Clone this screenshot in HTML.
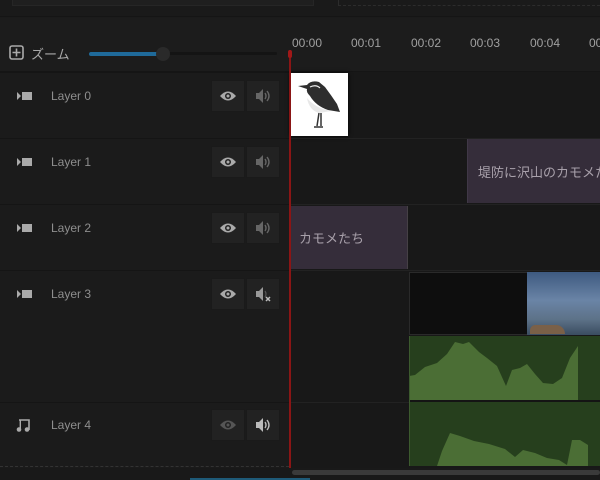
<!DOCTYPE html>
<html><head><meta charset="utf-8"><style>
*{margin:0;padding:0;box-sizing:border-box}
body{width:600px;height:480px;background:#1b1b1b;position:relative;overflow:hidden;font-family:"Liberation Sans","Noto Sans CJK JP",sans-serif;color:#9a9a9a}
.a{position:absolute}
.lbl{font-size:12px;color:#8e8e8e}
.btn{position:absolute;width:34px;height:32px;background:#222;border:1px solid #1a1a1a}
.tc{position:absolute;top:36px;font-size:12px;color:#a0a0a0}
.row{position:absolute;left:0;width:600px;border-top:1px solid #151515}
</style></head><body>
<div class="a" style="left:0;top:0;width:600px;height:17px;background:#1a1a1a;border-bottom:1px solid #151515"></div>
<div class="a" style="left:12px;top:0;width:302px;height:6px;background:#1f1f1f;border:1px solid #262626;border-top:none"></div>
<div class="a" style="left:338px;top:0;width:262px;height:6px;border-bottom:1px dashed #2c2c2c;border-left:1px dashed #2c2c2c"></div>
<div class="a" style="left:0;top:18px;width:600px;height:54px;background:#1c1c1c;border-bottom:1px solid #151515"></div>
<svg class="a" style="left:9px;top:45px" width="15" height="15" viewBox="0 0 15 15"><rect x="1" y="1" width="13" height="13" rx="2" fill="none" stroke="#aaa" stroke-width="1.6"/><path d="M7.5 3.5v8M3.5 7.5h8" stroke="#aaa" stroke-width="1.6"/></svg>
<div class="a" style="left:31px;top:44px;font-size:13px;color:#a8a8a8">ズーム</div>
<div class="a" style="left:89px;top:52px;width:188px;height:3px;background:#141414;border-radius:2px"></div>
<div class="a" style="left:89px;top:52px;width:70px;height:4px;background:#1f6a9a;border-radius:2px"></div>
<div class="a" style="left:156px;top:47px;width:14px;height:14px;background:#2a2a2a;border-radius:50%"></div>
<div class="tc" style="left:292px">00:00</div><div class="tc" style="left:351px">00:01</div><div class="tc" style="left:411px">00:02</div><div class="tc" style="left:470px">00:03</div><div class="tc" style="left:530px">00:04</div><div class="tc" style="left:589px">00:05</div>
<div class="row" style="top:72px;height:66px"></div>
<div class="row" style="top:138px;height:66px"></div>
<div class="row" style="top:204px;height:66px"></div>
<div class="row" style="top:270px;height:132px"></div>
<div class="row" style="top:402px;height:64px"></div>
<div class="a" style="left:0;top:466px;width:289px;border-top:1px dashed #333"></div>
<div class="a" style="left:289px;top:72px;width:311px;height:396px;background:#181818"></div>
<div class="a" style="left:289px;top:138px;width:311px;height:1px;background:#222"></div>
<div class="a" style="left:289px;top:204px;width:311px;height:1px;background:#222"></div>
<div class="a" style="left:289px;top:270px;width:311px;height:1px;background:#222"></div>
<div class="a" style="left:289px;top:402px;width:311px;height:1px;background:#222"></div>
<svg class="a" style="left:17px;top:91px" width="15" height="10"><path d="M0 1l4 4-4 4z" fill="#aaa"/><rect x="5" y="1" width="10" height="8" fill="#aaa"/></svg>
<div class="a lbl" style="left:51px;top:89px">Layer 0</div>
<svg class="a" style="left:17px;top:157px" width="15" height="10"><path d="M0 1l4 4-4 4z" fill="#aaa"/><rect x="5" y="1" width="10" height="8" fill="#aaa"/></svg>
<div class="a lbl" style="left:51px;top:155px">Layer 1</div>
<svg class="a" style="left:17px;top:223px" width="15" height="10"><path d="M0 1l4 4-4 4z" fill="#aaa"/><rect x="5" y="1" width="10" height="8" fill="#aaa"/></svg>
<div class="a lbl" style="left:51px;top:221px">Layer 2</div>
<svg class="a" style="left:17px;top:289px" width="15" height="10"><path d="M0 1l4 4-4 4z" fill="#aaa"/><rect x="5" y="1" width="10" height="8" fill="#aaa"/></svg>
<div class="a lbl" style="left:51px;top:287px">Layer 3</div>
<svg class="a" style="left:16px;top:418px" width="14" height="14"><path d="M3 2h10v10" fill="none" stroke="#aaa" stroke-width="1.6"/><circle cx="3" cy="11.5" r="2.3" fill="#aaa"/><circle cx="11" cy="11.5" r="2.3" fill="#aaa"/><path d="M4.3 2v9" stroke="#aaa" stroke-width="1.4"/></svg>
<div class="a lbl" style="left:51px;top:418px">Layer 4</div>
<div class="btn" style="left:211px;top:80px"></div><div class="btn" style="left:246px;top:80px"></div>
<div class="btn" style="left:211px;top:146px"></div><div class="btn" style="left:246px;top:146px"></div>
<div class="btn" style="left:211px;top:212px"></div><div class="btn" style="left:246px;top:212px"></div>
<div class="btn" style="left:211px;top:278px"></div><div class="btn" style="left:246px;top:278px"></div>
<div class="btn" style="left:211px;top:409px"></div><div class="btn" style="left:246px;top:409px"></div>
<svg class="a" style="left:219px;top:89px" width="18" height="14"><path d="M1 7Q9 -2 17 7Q9 16 1 7z" fill="#aaa"/><circle cx="9" cy="7" r="3" fill="#222"/><circle cx="9" cy="7" r="1.5" fill="#aaa"/></svg>
<svg class="a" style="left:219px;top:155px" width="18" height="14"><path d="M1 7Q9 -2 17 7Q9 16 1 7z" fill="#aaa"/><circle cx="9" cy="7" r="3" fill="#222"/><circle cx="9" cy="7" r="1.5" fill="#aaa"/></svg>
<svg class="a" style="left:219px;top:221px" width="18" height="14"><path d="M1 7Q9 -2 17 7Q9 16 1 7z" fill="#aaa"/><circle cx="9" cy="7" r="3" fill="#222"/><circle cx="9" cy="7" r="1.5" fill="#aaa"/></svg>
<svg class="a" style="left:219px;top:287px" width="18" height="14"><path d="M1 7Q9 -2 17 7Q9 16 1 7z" fill="#aaa"/><circle cx="9" cy="7" r="3" fill="#222"/><circle cx="9" cy="7" r="1.5" fill="#aaa"/></svg>
<svg class="a" style="left:219px;top:418px" width="18" height="14"><path d="M1 7Q9 -2 17 7Q9 16 1 7z" fill="#555"/><circle cx="9" cy="7" r="3" fill="#222"/><circle cx="9" cy="7" r="1.5" fill="#555"/></svg>
<svg class="a" style="left:255px;top:88px" width="16" height="16"><path d="M1 5h3l4-4v14l-4-4H1z" fill="#666"/><path d="M10 5q2 3 0 6M12 3q4 5 0 10" fill="none" stroke="#666" stroke-width="1.4"/></svg>
<svg class="a" style="left:255px;top:154px" width="16" height="16"><path d="M1 5h3l4-4v14l-4-4H1z" fill="#666"/><path d="M10 5q2 3 0 6M12 3q4 5 0 10" fill="none" stroke="#666" stroke-width="1.4"/></svg>
<svg class="a" style="left:255px;top:220px" width="16" height="16"><path d="M1 5h3l4-4v14l-4-4H1z" fill="#666"/><path d="M10 5q2 3 0 6M12 3q4 5 0 10" fill="none" stroke="#666" stroke-width="1.4"/></svg>
<svg class="a" style="left:255px;top:286px" width="16" height="16"><path d="M1 5h3l4-4v14l-4-4H1z" fill="#999"/><path d="M10 5q2 3 0 6" fill="none" stroke="#555" stroke-width="1.2"/><path d="M11 11l4 4M15 11l-4 4" stroke="#bbb" stroke-width="1.5"/></svg>
<svg class="a" style="left:255px;top:417px" width="16" height="16"><path d="M1 5h3l4-4v14l-4-4H1z" fill="#bbb"/><path d="M10 5q2 3 0 6M12 3q4 5 0 10" fill="none" stroke="#bbb" stroke-width="1.4"/></svg>
<div class="a" style="left:290px;top:73px;width:58px;height:63px;background:#fff;box-shadow:0 0 4px #000"></div>
<svg class="a" style="left:290px;top:73px" width="58" height="63"><path d="M8 13l9-1q4-5 12-3l6 5q6 8 12 17l3 8-12-2q-12-4-18-14q-4-4-3-7z" fill="#2e2e2e"/><path d="M17 25q8 10 24 13l-12 2q-10-3-12-15z" fill="#e8e8e8"/><path d="M20 14q6-3 10 1" stroke="#eee" stroke-width="1.2" fill="none"/><path d="M29 40l-2 13m4-13l0 13M24 54h9" stroke="#333" stroke-width="1.5"/></svg>
<div class="a" style="left:467px;top:139px;width:133px;height:64px;background:#352d3a;border-left:1px solid #403847"></div>
<div class="a" style="left:478px;top:162px;font-size:13px;color:#a8a0aa;white-space:nowrap">堤防に沢山のカモメた</div>
<div class="a" style="left:290px;top:206px;width:118px;height:63px;background:#352d3a;border-right:1px solid #454045"></div>
<div class="a" style="left:299px;top:228px;font-size:13px;color:#a8a0aa">カモメたち</div>
<div class="a" style="left:409px;top:272px;width:191px;height:63px;background:#0e0e0e;border:1px solid #2a2a2a"></div>
<div class="a" style="left:527px;top:272px;width:73px;height:63px;background:linear-gradient(#3e5a80,#6a84a6 45%,#5d7288 75%,#3a4c60)"></div>
<div class="a" style="left:530px;top:325px;width:35px;height:9px;background:#7a6048;border-radius:6px 10px 0 0"></div>
<svg class="a" style="left:409px;top:336px" width="191" height="130"><rect width="191" height="65" fill="#263f1d"/><path d="M0 40l6-1 10-8 12-4 10-9 8-12 8 2 6-2 10 10 8 6 10 8 9 20 6-16 8-2 7-4 8 10 8 9 10 1 9-6 8-20 8-12V65H0z" fill="#4b6e35"/><rect y="64" width="191" height="2" fill="#141414"/><rect y="66" width="191" height="64" fill="#263f1d"/><path d="M28 130l5-15 8-18 10 3 14 5 15 3 16 5 10 8 8-7 12 3 12 5 12 2 8 5 5-25 8 0 8 5V130z" fill="#4b6e35"/><rect width="1" height="130" fill="#3c5a2e"/></svg>
<div class="a" style="left:289px;top:50px;width:2px;height:420px;background:#8a1515"></div>
<div class="a" style="left:288px;top:50px;width:4px;height:8px;background:#a01818;border-radius:2px"></div>
<div class="a" style="left:0;top:468px;width:600px;height:12px;background:#191919"></div>
<div class="a" style="left:292px;top:470px;width:308px;height:5px;background:#3a3a3a;border-radius:3px"></div>
<div class="a" style="left:190px;top:478px;width:120px;height:2px;background:#1e5a78"></div>
</body></html>
